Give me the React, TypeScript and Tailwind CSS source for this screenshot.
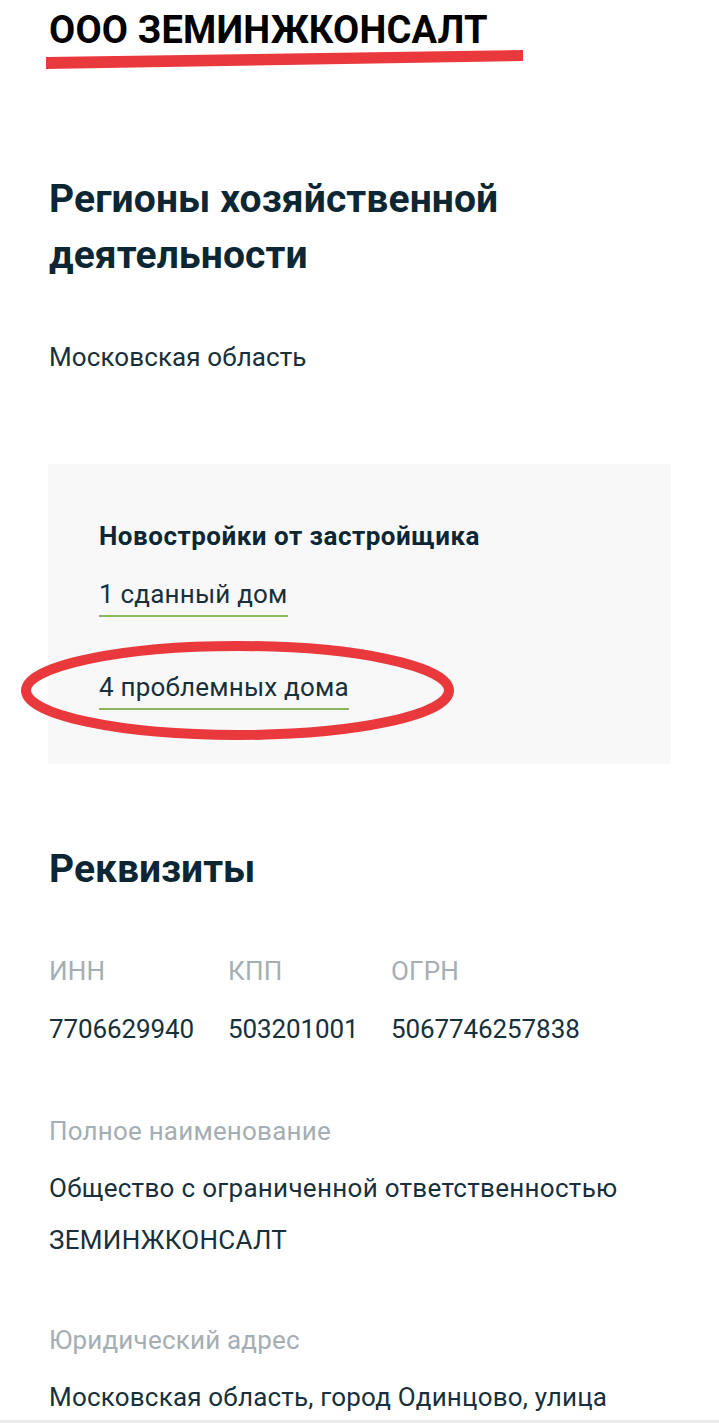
import React from 'react';

const RequisiteColumn: React.FC<{ label: string; value: string; className: string }> = ({ label, value, className }) => (
  <div className={className}>
    <p className="text-[26px] leading-[40px] tracking-[0.2px] text-[#a5aeb3]">{label}</p>
    <p className="mt-[18px] text-[26px] leading-[40px] tracking-[-0.1px] text-[#17303b]">{value}</p>
  </div>
);

const Annotations: React.FC = () => (
  <svg className="pointer-events-none absolute left-0 top-0" width="719" height="1423" viewBox="0 0 719 1423">
    <polygon points="46,57 523,50 523,61 46,69" fill="#e9393d" />
    <ellipse cx="237.5" cy="690.5" rx="211.5" ry="44.5" fill="none" stroke="#e9393d" strokeWidth="10" />
  </svg>
);

export default function App() {
  return (
    <div className="relative min-h-[1423px] w-[719px] overflow-hidden bg-white font-['Roboto',_'Liberation_Sans',_sans-serif] text-[#17303b]">
      <main className="flex flex-col px-[49px] pt-[8px]">
        <h1 className="text-[38px] font-bold leading-[44px] tracking-[0.2px] text-black">ООО ЗЕМИНЖКОНСАЛТ</h1>

        <h2 className="mt-[119px] text-[39px] font-bold leading-[56px] tracking-[0.1px] text-[#0c2733]">
          Регионы хозяйственной
          <br />
          деятельности
        </h2>
        <p className="mt-[54px] text-[26px] leading-[40px] tracking-[0.1px]">Московская область</p>

        <section className="-ml-px mt-[87px] flex h-[300px] w-[623px] flex-col items-start bg-[#f8f8f8] pl-[51px] pt-[54px]">
          <h3 className="text-[26px] font-bold leading-[36px] tracking-[0.5px] text-[#0c2733]">Новостройки от застройщика</h3>
          <a className="mt-[22px] inline-block border-b-2 border-[#8ab860] pb-[3px] text-[26px] leading-[36px] tracking-[0.2px] text-[#17303b]">
            1 сданный дом
          </a>
          <a className="mt-[52px] inline-block border-b-2 border-[#8ab860] pb-[3px] text-[26px] leading-[36px] tracking-[0.2px] text-[#17303b]">
            4 проблемных дома
          </a>
        </section>

        <h2 className="mt-[77px] text-[39px] font-bold leading-[56px] tracking-[0px] text-[#0c2733]">Реквизиты</h2>

        <div className="mt-[54px] flex">
          <RequisiteColumn className="w-[179px]" label="ИНН" value="7706629940" />
          <RequisiteColumn className="w-[163px]" label="КПП" value="503201001" />
          <RequisiteColumn className="" label="ОГРН" value="5067746257838" />
        </div>

        <p className="mt-[62px] text-[26px] leading-[40px] tracking-[0.2px] text-[#a5aeb3]">Полное наименование</p>
        <p className="mt-[11px] text-[26px] leading-[52px] tracking-[0.3px]">
          Общество с ограниченной ответственностью
          <br />
          ЗЕМИНЖКОНСАЛТ
        </p>

        <p className="mt-[54px] text-[26px] leading-[40px] tracking-[0.2px] text-[#a5aeb3]">Юридический адрес</p>
        <p className="mt-[11px] text-[26px] leading-[52px] tracking-[0.2px]">Московская область, город Одинцово, улица</p>
      </main>

      <Annotations />
      <div className="absolute bottom-0 left-0 h-[3px] w-full bg-[#ebebeb]" />
    </div>
  );
}
